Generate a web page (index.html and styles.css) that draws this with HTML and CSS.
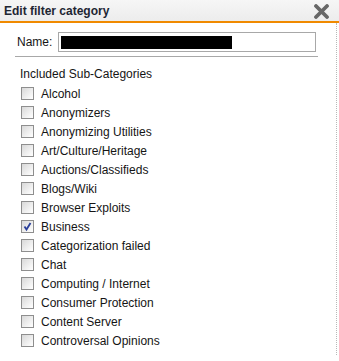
FILE: index.html
```html
<!DOCTYPE html>
<html lang="en">
<head>
    <meta charset="UTF-8">
    <meta name="viewport" content="width=device-width, initial-scale=1.0">
    <title>Edit filter category</title>
    <link rel="stylesheet" href="styles.css">
</head>
<body>
    <div class="dialog">
        <div class="titlebar">
            <span class="title">Edit filter category</span>
            <svg class="close" width="17" height="15" viewBox="0 0 17 15">
                <path d="M3 2 L14 13 M14 2 L3 13" stroke="#676767" stroke-width="3.8" stroke-linecap="round"/>
            </svg>
        </div>
        <div class="content">
            <div class="name-row">
                <label for="catName">Name:</label>
                <div class="name-input" id="catName"><span class="redact"></span></div>
            </div>
            <div class="divider"></div>
            <div class="heading">Included Sub-Categories</div>
            <ul class="cats">
                <li><span class="box"></span>Alcohol</li>
                <li><span class="box"></span>Anonymizers</li>
                <li><span class="box"></span>Anonymizing Utilities</li>
                <li><span class="box"></span>Art/Culture/Heritage</li>
                <li><span class="box"></span>Auctions/Classifieds</li>
                <li><span class="box"></span>Blogs/Wiki</li>
                <li><span class="box"></span>Browser Exploits</li>
                <li><span class="box"><svg width="11" height="11" viewBox="0 0 11 11"><path d="M2.5 5.5 L4.5 8.5 L8.5 2" fill="none" stroke="#2a3f9a" stroke-width="1.8"/></svg></span>Business</li>
                <li><span class="box"></span>Categorization failed</li>
                <li><span class="box"></span>Chat</li>
                <li><span class="box"></span>Computing / Internet</li>
                <li><span class="box"></span>Consumer Protection</li>
                <li><span class="box"></span>Content Server</li>
                <li><span class="box"></span>Controversal Opinions</li>
            </ul>
        </div>
    </div>
</body>
</html>
```

FILE: styles.css
```css
body {
    margin: 0;
    font-family: "Liberation Sans", Arial, sans-serif;
    font-size: 12px;
    color: #151515;
    background: #fff;
}
.dialog {
    width: 339px;
    height: 361px;
}
.titlebar {
    height: 21px;
    display: flex;
    align-items: center;
    justify-content: space-between;
    padding: 0 9px 0 4px;
    background: linear-gradient(#f6f6f6, #ececec);
    border-bottom: 2px solid #f08a00;
}
.title {
    font-weight: bold;
    font-size: 12px;
    color: #1e2633;
}
.close {
    display: block;
    margin-top: 1px;
}
.content {
    height: 332px;
    margin-right: 2px;
    border-right: 1px dotted #b8b8b8;
}
.name-row {
    display: flex;
    align-items: center;
    padding: 9px 0 0 17px;
}
.name-row label {
    width: 41px;
}
.name-input {
    width: 254px;
    height: 18px;
    border: 1px solid #a8a8a8;
    display: flex;
    align-items: center;
    padding-left: 2px;
}
.redact {
    display: block;
    width: 171px;
    height: 13px;
    background: #000;
}
.divider {
    height: 1px;
    margin: 4px 0 0 15px;
    width: 303px;
    background: #a8a8a8;
}
.heading {
    margin: 8px 0 0 20px;
    line-height: 19px;
}
.cats {
    list-style: none;
    margin: 0;
    padding: 0 0 0 21px;
}
.cats li {
    display: flex;
    align-items: center;
    height: 19px;
}
.box {
    width: 11px;
    height: 11px;
    margin-right: 7px;
    border: 1px solid #8e8e8e;
    background: linear-gradient(135deg, #d8d8d8, #f4f4f4 70%, #fff);
    display: flex;
    align-items: center;
    justify-content: center;
}
.box svg {
    display: block;
}
```
